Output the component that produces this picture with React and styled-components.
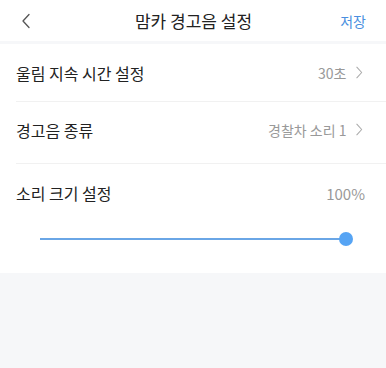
import React from 'react';
import styled, { createGlobalStyle } from 'styled-components';

const GlobalStyle = createGlobalStyle`
  html, body {
    margin: 0;
    padding: 0;
    background-color: #f6f7f9;
    font-family: "Noto Sans CJK KR", "Noto Sans", sans-serif;
  }
`;

function Chevron({ left, size = 14, color = '#999' }) {
  return (
    <svg width={size / 2 + 2} height={size} viewBox="0 0 9 16" fill="none">
      <path
        d={left ? 'M7.5 1.5L1.5 8L7.5 14.5' : 'M1.5 1.5L7.5 8L1.5 14.5'}
        stroke={color}
        strokeWidth="1.3"
        strokeLinecap="round"
        strokeLinejoin="round"
      />
    </svg>
  );
}

function App() {
  const volume = 100;

  return (
    <>
      <GlobalStyle />
      <StPage>
        <StHeader>
          <StBack>
            <Chevron left size={16} color="#555" />
          </StBack>
          <StTitle>맘카 경고음 설정</StTitle>
          <StSave>저장</StSave>
        </StHeader>
        <StCard>
          <StRow $height={58}>
            <StLabel>울림 지속 시간 설정</StLabel>
            <StValue>
              30초
              <Chevron size={13} color="#aaa" />
            </StValue>
          </StRow>
          <StRow $height={62} $shift={6}>
            <StLabel>경고음 종류</StLabel>
            <StValue>
              경찰차 소리 1
              <Chevron size={13} color="#aaa" />
            </StValue>
          </StRow>
          <StVolume>
            <StVolumeHead>
              <StLabel>소리 크기 설정</StLabel>
              <StPercent>{volume}%</StPercent>
            </StVolumeHead>
            <StSlider>
              <StTrack>
                <StFill style={{ width: `${volume}%` }} />
                <StThumb style={{ left: `${volume}%` }} />
              </StTrack>
            </StSlider>
          </StVolume>
        </StCard>
      </StPage>
    </>
  );
}

export default App;

const StPage = styled.div`
  width: 386px;
  min-height: 368px;
  background-color: #f6f7f9;
`;

const StHeader = styled.div`
  height: 41px;
  background-color: #ffffff;
  display: flex;
  align-items: center;
  justify-content: space-between;
  padding: 0 20px 0 21px;
  margin-bottom: 3px;
`;

const StBack = styled.div`
  width: 30px;
  display: flex;
  align-items: center;
  padding-top: 1px;
`;

const StTitle = styled.div`
  font-size: 17px;
  font-weight: 400;
  color: #222;
`;

const StSave = styled.div`
  font-size: 14px;
  color: #4a8fe0;
  width: 30px;
  text-align: right;
`;

const StCard = styled.div`
  background-color: #ffffff;
  padding-left: 16px;
`;

const StRow = styled.div`
  height: ${(p) => p.$height}px;
  box-sizing: border-box;
  padding-bottom: ${(p) => p.$shift || 0}px;
  padding-right: 23px;
  display: flex;
  align-items: center;
  justify-content: space-between;
  border-bottom: 1px solid #f1f1f1;
`;

const StLabel = styled.div`
  font-size: 16px;
  color: #222;
`;

const StValue = styled.div`
  display: flex;
  align-items: center;
  gap: 8px;
  font-size: 14px;
  color: #999;
`;

const StVolume = styled.div`
  height: 109px;
  padding-right: 21px;
  box-sizing: border-box;
  padding-top: 17px;
`;

const StVolumeHead = styled.div`
  display: flex;
  justify-content: space-between;
  align-items: center;
`;

const StPercent = styled.div`
  font-size: 15px;
  color: #999;
`;

const StSlider = styled.div`
  padding: 0 19px 0 24px;
  margin-top: 33px;
`;

const StTrack = styled.div`
  position: relative;
  height: 2px;
  background-color: #dde6f0;
`;

const StFill = styled.div`
  height: 100%;
  background-color: #6aa6e6;
`;

const StThumb = styled.div`
  position: absolute;
  top: 50%;
  width: 14px;
  height: 14px;
  border-radius: 50%;
  background-color: #56a4f4;
  transform: translate(-50%, -50%);
`;
